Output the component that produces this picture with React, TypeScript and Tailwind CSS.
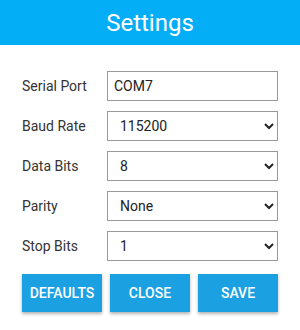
import { useState } from "react";

const selects = [
  { label: "Baud Rate", options: ["9600", "19200", "38400", "57600", "115200"], initial: "115200" },
  { label: "Data Bits", options: ["5", "6", "7", "8"], initial: "8" },
  { label: "Parity", options: ["None", "Even", "Odd"], initial: "None" },
  { label: "Stop Bits", options: ["1", "2"], initial: "1" },
];

export default function App() {
  const [port, setPort] = useState("COM7");
  const [values, setValues] = useState<string[]>(selects.map((s) => s.initial));

  return (
    <div className="w-[300px] h-[330px] bg-white font-['Roboto',sans-serif]">
      {/* HEADER */}
      <div className="h-[45px] bg-[#03aef6] flex items-center justify-center">
        <h1 className="text-[24px] text-white">Settings</h1>
      </div>

      <div className="px-[22px] pt-[26px]">
        <div className="flex items-center h-[30px]">
          <label className="w-[85px] text-[14px] text-[#333]">Serial Port</label>
          <input
            className="w-[171px] h-[30px] border border-[#999] px-[6px] text-[14px] text-[#222] outline-none"
            value={port}
            onChange={(e) => setPort(e.target.value)}
          />
        </div>

        {selects.map((s, i) => (
          <div key={s.label} className="flex items-center h-[30px] mt-[10px]">
            <label className="w-[85px] text-[14px] text-[#333]">{s.label}</label>
            <select
              className="w-[171px] h-[30px] border border-[#999] pl-[8px] pr-[6px] text-[14px] text-[#222] bg-white outline-none"
              value={values[i]}
              onChange={(e) => {
                const next = [...values];
                next[i] = e.target.value;
                setValues(next);
              }}
            >
              {s.options.map((o) => (
                <option key={o} value={o}>
                  {o}
                </option>
              ))}
            </select>
          </div>
        ))}

        {/* BOTONES */}
        <div className="flex gap-[8px] mt-[13px]">
          {["DEFAULTS", "CLOSE", "SAVE"].map((b) => (
            <button
              key={b}
              className="w-[80px] h-[38px] bg-[#1ba1e2] text-white text-[14px] font-medium shadow-[0_2px_3px_rgba(0,0,0,0.3)]"
            >
              {b}
            </button>
          ))}
        </div>
      </div>
    </div>
  );
}
